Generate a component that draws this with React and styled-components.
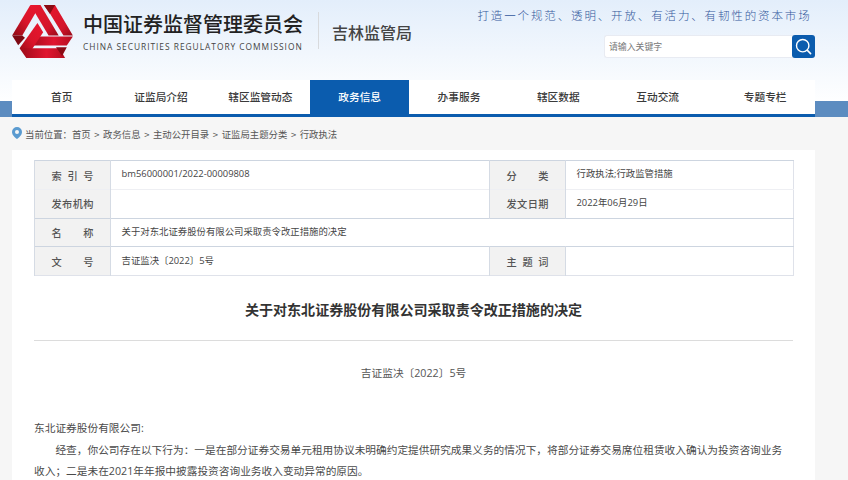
import React from "react";
import styled, { createGlobalStyle } from "styled-components";

const Global = createGlobalStyle`
  html, body { margin: 0; padding: 0; height: 480px; overflow: hidden; background: #f6f6f6; }
  * { box-sizing: border-box; }
  body { font-family: "Open Sans", "Noto Sans CJK SC", sans-serif; color: #444; }
`;

const CJK = `"Noto Sans CJK SC", "Noto Sans", sans-serif`;

const Page = styled.div`width: 848px; height: 480px; overflow: hidden;`;
const Top = styled.header`height: 117px; background: linear-gradient(#e3eefb, #ffffff 105px);`;
const Masthead = styled.div`height: 80px; padding: 5px 33px 0 12px; display: flex; justify-content: space-between;`;
const Brand = styled.div`display: flex; align-items: flex-start;`;
const Names = styled.div`margin-left: 10px; padding-top: 7px; width: 225px;`;
const Cn = styled.div`font: 500 20px/24px ${CJK}; color: #222; white-space: nowrap;`;
const En = styled.div`font: 400 8.4px/11px "Open Sans", sans-serif; letter-spacing: 0.98px; color: #444; margin-top: 5px; white-space: nowrap;`;
const Divider = styled.div`width: 1px; height: 37px; background: #d8dadd; margin: 7px 13px 0 10px;`;
const Bureau = styled.div`font: 500 16px/24px ${CJK}; color: #444; margin-top: 15px; white-space: nowrap;`;
const Side = styled.div`display: flex; flex-direction: column; align-items: flex-end;`;
const Slogan = styled.div`font: 300 11.5px/20px ${CJK}; letter-spacing: 1.86px; color: #33589b; white-space: nowrap; margin-right: 3.5px;`;
const Search = styled.div`display: flex; width: 211px; height: 23px; margin-top: 10px; background: #fff; border: 1px solid #e8ebf2; border-right: 0; border-radius: 3px;`;
const Placeholder = styled.div`flex: 1; font: 400 8.9px/21px ${CJK}; color: #777; padding-left: 4px;`;
const SearchBtn = styled.div`width: 23px; height: 23px; margin-top: -1px; background: #0b5cae; border-radius: 3px; display: flex; align-items: center; justify-content: center;`;
const NavBand = styled.div`height: 37px; padding: 0 33px 0 12px; background: linear-gradient(transparent 21px, #5c8cc0 21px);`;
const Nav = styled.nav`display: flex; height: 37px; background: #fff; border-bottom: 3px solid #0b5cae; `;
const NavItem = styled.div`
  width: ${p => p.$wide ? "107.7px" : "99.33px"};
  padding-left: ${p => p.$wide ? "8px" : "0"};
  text-align: center;
  font: 500 10.7px/34px ${CJK};
  color: ${p => p.$active ? "#fff" : "#3a3a3a"};
  background: ${p => p.$active ? "#0b5cae" : "transparent"};
`;
const Crumbs = styled.div`height: 33px; padding: 0 0 0 12px; display: flex; align-items: center; font: 400 9.4px/14px ${CJK}; color: #555; white-space: pre;`;
const Sep = styled.span`margin: 0 3.6px;`;
const PinIcon = styled.svg`width: 10px; height: 12px; margin-right: 3px; margin-top: -2px; flex: none;`;
const Panel = styled.main`margin: 0 33px 0 12px; background: #fff; padding: 10px 22px 0; height: 330px;`;
const Table = styled.table`width: 759px; border-collapse: collapse; table-layout: fixed; border: 1px solid #dfe2ea;`;
const Row = styled.tr`height: 28.75px; border-top: 1px solid ${p => p.$soft ? "#eeeff3" : "#cdd5e0"};`;
const Label = styled.td`background: #f2f2f2; border-left: 1px solid #d5dbe4; border-right: 1px solid #d5dbe4; text-align: center; padding: 0; line-height: 14px; vertical-align: middle;`;
const LabelText = styled.span`display: inline-block; vertical-align: middle; width: 42px; font: 500 10.2px/14px ${CJK}; color: #555; text-align-last: justify; white-space: nowrap;`;
const Value = styled.td`font-size: 9.4px; line-height: 14px; color: #444; padding: 0 0 1px 10.5px; white-space: nowrap;`;
const Title = styled.h1`margin: 0; height: 65px; font: 700 14.05px/66px ${CJK}; color: #333; text-align: center; border-bottom: 1px solid #dcdcdc;`;
const DocNo = styled.div`text-align: center; font-size: 10.7px; line-height: 16px; color: #555; margin-top: 24px;`;
const Body = styled.div`margin-top: 37px; padding-right: 5px; font-size: 10.7px; line-height: 21.5px; color: #4a4a4a;`;
const Para = styled.p`margin: 0; text-indent: ${p => p.$indent ? "2em" : "0"};`;

const navs = ["首页", "证监局介绍", "辖区监管动态", "政务信息", "办事服务", "辖区数据", "互动交流", "专题专栏"];
const crumbs = ["首页", "政务信息", "主动公开目录", "证监局主题分类", "行政执法"];

function Logo() {
  return (
    <svg width="61" height="53" viewBox="38 15 180 157" style={{ flex: "none" }}>
      <defs>
        <linearGradient id="a" x1="0" y1="1" x2="1" y2="0">
          <stop offset="0" stopColor="#8d0a14" /><stop offset="0.5" stopColor="#d9142a" /><stop offset="1" stopColor="#e8162e" />
        </linearGradient>
        <linearGradient id="b" x1="0" y1="0" x2="1" y2="0">
          <stop offset="0" stopColor="#a70c1c" /><stop offset="0.55" stopColor="#e01630" /><stop offset="1" stopColor="#b50e20" />
        </linearGradient>
        <linearGradient id="c" x1="0" y1="0" x2="1" y2="1">
          <stop offset="0" stopColor="#e8162e" /><stop offset="0.7" stopColor="#d3142a" /><stop offset="1" stopColor="#960a18" />
        </linearGradient>
      </defs>
      <path d="M92 15 L38 105 L68 105 L111 32 Z" fill="url(#a)" />
      <path d="M38 105 L56 134 L76 112 L68 105 Z" fill="#7d0812" />
      <path d="M92 15 H122 L176 105 L146 105 Z" fill="url(#c)" />
      <path d="M132 15 H165 L218 105 L190 105 L150 40 Z" fill="url(#c)" />
      <path d="M132 15 H165 L150 42 Z" fill="#8a0a14" />
      <path d="M108 108 H218 L200 135 H92 Z" fill="url(#b)" />
      <path d="M113 68 L130 96 L80 172 L60 143 Z" fill="url(#a)" />
      <path d="M72 143 H178 L195 172 H80 Z" fill="url(#b)" />
      <path d="M168 140 H200 L186 166 Z" fill="#8a0a14" />
    </svg>
  );
}

function Rows() {
  return (
    <tbody>
      <Row>
        <Label><LabelText>索引号</LabelText></Label>
        <Value>bm56000001/2022-00009808</Value>
        <Label><LabelText>分类</LabelText></Label>
        <Value>行政执法;行政监管措施</Value>
      </Row>
      <Row $soft>
        <Label><LabelText>发布机构</LabelText></Label>
        <Value />
        <Label><LabelText>发文日期</LabelText></Label>
        <Value>2022年06月29日</Value>
      </Row>
      <Row>
        <Label><LabelText>名称</LabelText></Label>
        <Value colSpan={3}>关于对东北证券股份有限公司采取责令改正措施的决定</Value>
      </Row>
      <Row>
        <Label><LabelText>文号</LabelText></Label>
        <Value>吉证监决〔2022〕5号</Value>
        <Label><LabelText>主题词</LabelText></Label>
        <Value />
      </Row>
    </tbody>
  );
}

export default function App() {
  return (
    <Page>
      <Global />
      <Top>
        <Masthead>
          <Brand>
            <Logo />
            <Names>
              <Cn>中国证券监督管理委员会</Cn>
              <En>CHINA SECURITIES REGULATORY COMMISSION</En>
            </Names>
            <Divider />
            <Bureau>吉林监管局</Bureau>
          </Brand>
          <Side>
            <Slogan>打造一个规范、透明、开放、有活力、有韧性的资本市场</Slogan>
            <Search>
              <Placeholder>请输入关键字</Placeholder>
              <SearchBtn>
                <svg width="17" height="17" viewBox="0 0 17 17" fill="none" stroke="#fff">
                  <circle cx="7.7" cy="7.7" r="6.2" strokeWidth="1.4" />
                  <path d="M12.4 12.4 L15.6 15.6" strokeWidth="1.6" strokeLinecap="round" />
                </svg>
              </SearchBtn>
            </Search>
          </Side>
        </Masthead>
        <NavBand>
          <Nav>
            {navs.map((n, i) => (
              <NavItem key={n} $active={i === 3} $wide={i === 7}>{n}</NavItem>
            ))}
          </Nav>
        </NavBand>
      </Top>
      <Crumbs>
        <PinIcon viewBox="0 0 10 12">
          <path fillRule="evenodd" fill="#5b9bd0" d="M5 0a5 5 0 0 1 5 5c0 3-3 5.500-5 7-2-1.500-5-4-5-7a5 5 0 0 1 5-5zm0 3a2 2 0 1 0 0 4 2 2 0 0 0 0-4z" />
        </PinIcon>
        当前位置：
        {crumbs.map((c, i) => (
          <React.Fragment key={c}>{i > 0 && <Sep>&gt;</Sep>}{c}</React.Fragment>
        ))}
      </Crumbs>
      <Panel>
        <Table>
          <colgroup>
            <col style={{ width: 76 }} /><col style={{ width: 379 }} /><col style={{ width: 76 }} /><col style={{ width: 228 }} />
          </colgroup>
          <Rows />
        </Table>
        <Title>关于对东北证券股份有限公司采取责令改正措施的决定</Title>
        <DocNo>吉证监决〔2022〕5号</DocNo>
        <Body>
          <Para>东北证券股份有限公司:</Para>
          <Para $indent>经查，你公司存在以下行为：一是在部分证券交易单元租用协议未明确约定提供研究成果义务的情况下，将部分证券交易席位租赁收入确认为投资咨询业务收入；二是未在2021年年报中披露投资咨询业务收入变动异常的原因。</Para>
        </Body>
      </Panel>
    </Page>
  );
}
